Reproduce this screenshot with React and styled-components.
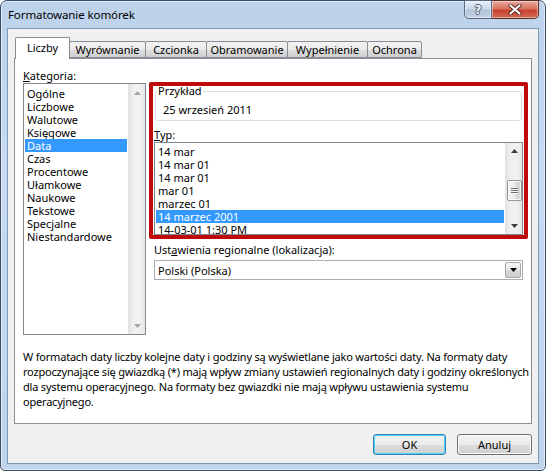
import styled, { createGlobalStyle } from 'styled-components';

const GlobalStyle = createGlobalStyle`
  html, body {
    margin: 0;
    padding: 0;
    background: #ffffff;
  }
  body {
    font-family: "Noto Sans", "Open Sans", sans-serif;
    font-size: 11px;
    color: #000;
  }
  * { box-sizing: border-box; }
`

const Window = styled.div`
  width: 546px;
  height: 471px;
  display: flex;
  flex-direction: column;
  padding: 0 6px 6px 6px;
  border: 1px solid #3b4e69;
  border-radius: 7px 7px 5px 5px;
  background: linear-gradient(180deg, #bcd2eb 0%, #c7daf0 35%, #c3d7ee 70%, #bfd4ed 100%);
  box-shadow: inset 0 0 0 1px rgba(255, 255, 255, 0.55);
`

const TitleBar = styled.div`
  height: 27px;
  display: flex;
  align-items: flex-start;
`

const Title = styled.div`
  padding: 6px 0 0 1px;
  font-size: 11.5px;
  line-height: 16px;
  letter-spacing: -0.1px;
  color: #000;
`

const CaptionButton = styled.div`
  height: 19px;
  width: ${p => p.$w}px;
  margin-top: -1px;
  display: flex;
  align-items: center;
  justify-content: center;
  border: 1px solid ${p => (p.$close ? '#5b2b27' : '#56677f')};
  border-left-width: ${p => (p.$close ? 0 : 1)}px;
  border-radius: ${p => (p.$close ? '0 0 5px 0' : '0 0 0 5px')};
  margin-left: ${p => (p.$first ? 'auto' : '0')};
  background: ${p => (p.$close
    ? 'linear-gradient(180deg, #e9a99f 0%, #d8745f 45%, #c7432f 55%, #d36a56 100%)'
    : 'linear-gradient(180deg, #e6eef8 0%, #cbd8e8 45%, #b3c3d8 55%, #c5d4e6 100%)')};
  box-shadow: inset 0 0 0 1px rgba(255, 255, 255, 0.45);
`

const HelpGlyph = styled.span`
  font-family: "DejaVu Sans", sans-serif;
  font-weight: bold;
  font-size: 12px;
  line-height: 12px;
  color: #f4f7fb;
  text-shadow: -1px 0 #4b5b73, 1px 0 #4b5b73, 0 -1px #4b5b73, 0 1px #4b5b73;
`

const Client = styled.div`
  flex: 1;
  display: flex;
  flex-direction: column;
  border: 1px solid #7d97b8;
  background: #f0f0f0;
  padding: 8px 6px 8px 6px;
`

const TabRow = styled.div`
  height: 21px;
  display: flex;
  align-items: flex-end;
  padding-left: 1px;
  position: relative;
  z-index: 1;
`

const Tab = styled.div`
  width: ${p => p.$w}px;
  height: ${p => (p.$active ? 22 : 17)}px;
  margin-left: ${p => (p.$first ? 0 : -1)}px;
  margin-bottom: ${p => (p.$active ? -1 : 0)}px;
  display: flex;
  align-items: center;
  justify-content: center;
  padding-bottom: ${p => (p.$active ? 3 : 0)}px;
  border: 1px solid #898c95;
  border-bottom: ${p => (p.$active ? 'none' : '1px solid #898c95')};
  border-radius: 2px 2px 0 0;
  background: ${p => (p.$active ? '#ffffff' : 'linear-gradient(180deg, #f2f2f2 0%, #ebebeb 50%, #dddddd 51%, #cfcfcf 100%)')};
  position: relative;
  z-index: ${p => (p.$active ? 2 : 1)};
  white-space: nowrap;
`

const Panel = styled.div`
  height: 366px;
  display: flex;
  flex-direction: column;
  border: 1px solid #898c95;
  background: #ffffff;
  padding: 9px 2px 0 8px;
`

const Columns = styled.div`
  display: grid;
  grid-template-columns: 123px 379px;
  column-gap: 3px;
`

const Column = styled.div`
  display: flex;
  flex-direction: column;
`

const FieldLabel = styled.div`
  line-height: ${p => p.$lh || 14}px;
  margin-top: ${p => p.$mt || 0}px;
  padding-left: ${p => p.$pl || 0}px;
  white-space: nowrap;
`

const ListBox = styled.div`
  height: ${p => p.$h}px;
  display: flex;
  border: 1px solid #828790;
  background: #ffffff;
  overflow: hidden;
`

const Items = styled.div`
  flex: 1;
  display: flex;
  flex-direction: column;
  padding-top: ${p => p.$pt}px;
  padding-left: 1px;
  padding-right: 1px;
`

const Item = styled.div`
  height: 13px;
  line-height: 13px;
  padding-left: ${p => p.$pl}px;
  white-space: nowrap;
  background: ${p => (p.$selected ? '#3399ff' : 'transparent')};
  color: ${p => (p.$selected ? '#ffffff' : '#000000')};
`

const ScrollBar = styled.div`
  width: 17px;
  display: flex;
  flex-direction: column;
  background: linear-gradient(90deg, #e2e2e2 0%, #efefef 25%, #f2f2f2 60%, #e6e6e6 100%);
  border-left: 1px solid #e4e4e4;
`

const ScrollArrow = styled.div`
  height: 17px;
  flex-shrink: 0;
  display: flex;
  align-items: center;
  justify-content: center;
`

const Track = styled.div`
  flex: 1;
  display: flex;
  flex-direction: column;
  align-items: center;
`

const Thumb = styled.div`
  width: 15px;
  height: 21px;
  margin-top: ${p => p.$top}px;
  display: flex;
  flex-direction: column;
  align-items: center;
  justify-content: center;
  gap: 1px;
  border: 1px solid #979797;
  border-radius: 2px;
  background: linear-gradient(90deg, #f4f4f4 0%, #ececec 50%, #dcdcdc 51%, #d2d2d2 100%);
  box-shadow: inset 0 0 0 1px rgba(255, 255, 255, 0.7);
`

const Grip = styled.div`
  width: 7px;
  height: 1px;
  background: #6d6d6d;
  box-shadow: 0 1px 0 #f8f8f8;
`

const RedFrame = styled.div`
  margin-top: 14px;
  height: 157px;
  border: 4px solid #be0a0a;
  border-radius: 2px;
  padding: 0 1px;
  overflow: hidden;
  display: flex;
  flex-direction: column;
`

const GroupBox = styled.fieldset`
  margin: 0 1px;
  padding: 0;
  border: 1px solid #d5dfe5;
  border-radius: 3px;
  height: 35px;
`

const Legend = styled.legend`
  margin-left: 1px;
  padding: 0 1px;
  line-height: 10px;
`

const SampleValue = styled.div`
  padding: 7px 0 0 7px;
  line-height: 14px;
`

const Combo = styled.div`
  margin: 3px 0 0 5px;
  width: 369px;
  height: 20px;
  display: flex;
  align-items: center;
  justify-content: space-between;
  border: 1px solid #abadb3;
  background: #ffffff;
  padding: 0 1px 0 3px;
`

const ComboButton = styled.div`
  width: 16px;
  height: 16px;
  display: flex;
  align-items: center;
  justify-content: center;
  border: 1px solid #a8a8a8;
  border-radius: 2px;
  background: linear-gradient(180deg, #f5f5f5 0%, #e9e9e9 50%, #d9d9d9 51%, #cdcdcd 100%);
`

const Description = styled.div`
  margin-top: 14px;
  line-height: 15px;
  letter-spacing: -0.2px;
  white-space: nowrap;
`

const ButtonRow = styled.div`
  margin-top: 10px;
  display: flex;
  justify-content: flex-end;
  gap: 11px;
`

const Button = styled.div`
  width: ${p => p.$w}px;
  height: 21px;
  display: flex;
  align-items: center;
  justify-content: center;
  border: 1px solid ${p => (p.$default ? '#3c7fb1' : '#707070')};
  border-radius: 3px;
  background: linear-gradient(180deg, #f2f2f2 0%, #ebebeb 50%, #dddddd 51%, #cfcfcf 100%);
  box-shadow: ${p => (p.$default ? 'inset 0 0 0 1px #48d3fb' : 'inset 0 0 0 1px #fcfcfc')};
`

const Arrow = ({ up, color }) => (
  <svg width="7" height="4" viewBox="0 0 7 4">
    <path d={up ? 'M0 4 L3.5 0 L7 4 Z' : 'M0 0 L3.5 4 L7 0 Z'} fill={color} />
  </svg>
)

const categories = ['Ogólne', 'Liczbowe', 'Walutowe', 'Księgowe', 'Data', 'Czas', 'Procentowe',
  'Ułamkowe', 'Naukowe', 'Tekstowe', 'Specjalne', 'Niestandardowe']

const types = ['14 mar', '14 mar 01', '14 mar 01', 'mar 01', 'marzec 01', '14 marzec 2001', '14-03-01 1:30 PM']

const tabs = [
  { name: 'Liczby', w: 55 },
  { name: 'Wyrównanie', w: 77 },
  { name: 'Czcionka', w: 62 },
  { name: 'Obramowanie', w: 82 },
  { name: 'Wypełnienie', w: 81 },
  { name: 'Ochrona', w: 55 },
]

function App() {
  return (
    <>
      <GlobalStyle />
      <Window>
        <TitleBar>
          <Title>Formatowanie komórek</Title>
          <CaptionButton $w={28} $first><HelpGlyph>?</HelpGlyph></CaptionButton>
          <CaptionButton $w={47} $close>
            <svg width="14" height="11" viewBox="0 0 14 11">
              <path d="M2.5 1.5 L11.5 9.5 M11.5 1.5 L2.5 9.5" stroke="#5a2220" strokeWidth="4" strokeLinecap="round" />
              <path d="M2.5 1.5 L11.5 9.5 M11.5 1.5 L2.5 9.5" stroke="#ffffff" strokeWidth="2.2" strokeLinecap="round" />
            </svg>
          </CaptionButton>
        </TitleBar>
        <Client>
          <TabRow>
            {tabs.map((t, i) => (
              <Tab key={t.name} $w={t.w} $first={i === 0} $active={i === 0}>{t.name}</Tab>
            ))}
          </TabRow>
          <Panel>
            <Columns>
              <Column>
                <FieldLabel $lh={15}><u>K</u>ategoria:</FieldLabel>
                <ListBox $h={252}>
                  <Items $pt={3}>
                    {categories.map(c => (
                      <Item key={c} $pl={2} $selected={c === 'Data'}>{c}</Item>
                    ))}
                  </Items>
                  <ScrollBar>
                    <ScrollArrow><Arrow up color="#a3a3a3" /></ScrollArrow>
                    <Track />
                    <ScrollArrow><Arrow color="#a3a3a3" /></ScrollArrow>
                  </ScrollBar>
                </ListBox>
              </Column>
              <Column>
                <RedFrame>
                  <GroupBox>
                    <Legend>Przykład</Legend>
                    <SampleValue>25 wrzesień 2011</SampleValue>
                  </GroupBox>
                  <FieldLabel $mt={7}><u>T</u>yp:</FieldLabel>
                  <ListBox $h={94}>
                    <Items $pt={2}>
                      {types.map((t, i) => (
                        <Item key={i} $pl={2} $selected={i === 5}>{t}</Item>
                      ))}
                    </Items>
                    <ScrollBar>
                      <ScrollArrow><Arrow up color="#3d3d3d" /></ScrollArrow>
                      <Track><Thumb $top={20}><Grip /><Grip /><Grip /></Thumb></Track>
                      <ScrollArrow><Arrow color="#3d3d3d" /></ScrollArrow>
                    </ScrollBar>
                  </ListBox>
                </RedFrame>
                <FieldLabel $mt={4} $pl={5}>Ust<u>a</u>wienia regionalne (lokalizacja):</FieldLabel>
                <Combo>
                  <span>Polski (Polska)</span>
                  <ComboButton><Arrow color="#000000" /></ComboButton>
                </Combo>
              </Column>
            </Columns>
            <Description>
              W formatach daty liczby kolejne daty i godziny są wyświetlane jako wartości daty. Na formaty daty<br />
              rozpoczynające się gwiazdką (*) mają wpływ zmiany ustawień regionalnych daty i godziny określonych<br />
              dla systemu operacyjnego. Na formaty bez gwiazdki nie mają wpływu ustawienia systemu<br />
              operacyjnego.
            </Description>
          </Panel>
          <ButtonRow>
            <Button $w={73} $default>OK</Button>
            <Button $w={75}>Anuluj</Button>
          </ButtonRow>
        </Client>
      </Window>
    </>
  );
}

export default App;
